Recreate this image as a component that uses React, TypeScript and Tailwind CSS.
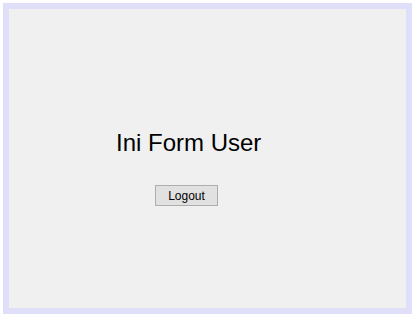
export default function App() {
  return (
    <div className="w-[417px] h-[319px] bg-white p-[3px] font-['Liberation_Sans',Arial,sans-serif]">
      <div className="w-[409px] h-[311px] border-[6px] border-[#dfdff9] bg-[#f0f0f0] pl-[107px] pt-[120px]">
        <h1 className="text-[24px] leading-[28px] text-black">Ini Form User</h1>
        <button className="mt-[28px] ml-[39px] w-[63px] h-[21px] bg-[#e1e1e1] border border-[#adadad] text-[12px] text-black flex items-center justify-center">
          Logout
        </button>
      </div>
    </div>
  );
}
